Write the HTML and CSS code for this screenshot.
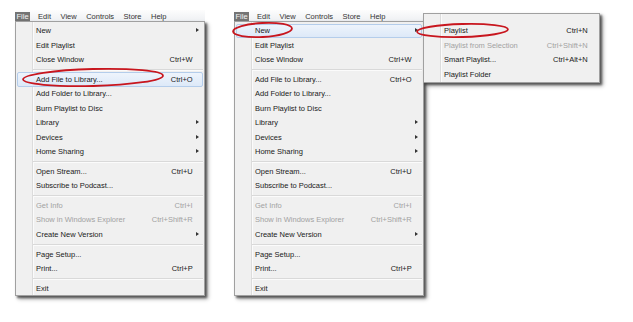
FILE: index.html
```html
<!DOCTYPE html>
<html>
<head>
<meta charset="utf-8">
<link rel="stylesheet" href="styles.css">
</head>
<body>
<div class="page">
  <div class="app">
    <div class="menubar">
      <span class="mb-item active">File</span><span class="mb-item">Edit</span><span class="mb-item">View</span><span class="mb-item">Controls</span><span class="mb-item">Store</span><span class="mb-item">Help</span>
    </div>
    <div class="menu main">
      <div class="item"><span class="label">New</span><span class="key"></span><span class="arrow sub"></span></div>
      <div class="item"><span class="label">Edit Playlist</span><span class="key"></span><span class="arrow"></span></div>
      <div class="item"><span class="label">Close Window</span><span class="key">Ctrl+W</span><span class="arrow"></span></div>
      <div class="sep"></div>
      <div class="item hot"><span class="label">Add File to Library...</span><span class="key">Ctrl+O</span><span class="arrow"></span></div>
      <div class="item"><span class="label">Add Folder to Library...</span><span class="key"></span><span class="arrow"></span></div>
      <div class="item"><span class="label">Burn Playlist to Disc</span><span class="key"></span><span class="arrow"></span></div>
      <div class="item"><span class="label">Library</span><span class="key"></span><span class="arrow sub"></span></div>
      <div class="item"><span class="label">Devices</span><span class="key"></span><span class="arrow sub"></span></div>
      <div class="item"><span class="label">Home Sharing</span><span class="key"></span><span class="arrow sub"></span></div>
      <div class="sep"></div>
      <div class="item"><span class="label">Open Stream...</span><span class="key">Ctrl+U</span><span class="arrow"></span></div>
      <div class="item"><span class="label">Subscribe to Podcast...</span><span class="key"></span><span class="arrow"></span></div>
      <div class="sep"></div>
      <div class="item off"><span class="label">Get Info</span><span class="key">Ctrl+I</span><span class="arrow"></span></div>
      <div class="item off"><span class="label">Show in Windows Explorer</span><span class="key">Ctrl+Shift+R</span><span class="arrow"></span></div>
      <div class="item"><span class="label">Create New Version</span><span class="key"></span><span class="arrow sub"></span></div>
      <div class="sep"></div>
      <div class="item"><span class="label">Page Setup...</span><span class="key"></span><span class="arrow"></span></div>
      <div class="item"><span class="label">Print...</span><span class="key">Ctrl+P</span><span class="arrow"></span></div>
      <div class="sep"></div>
      <div class="item"><span class="label">Exit</span><span class="key"></span><span class="arrow"></span></div>
    </div>
  </div>

  <div class="app">
    <div class="menubar">
      <span class="mb-item active">File</span><span class="mb-item">Edit</span><span class="mb-item">View</span><span class="mb-item">Controls</span><span class="mb-item">Store</span><span class="mb-item">Help</span>
    </div>
    <div class="menu main">
      <div class="item hot"><span class="label">New</span><span class="key"></span><span class="arrow sub"></span></div>
      <div class="item"><span class="label">Edit Playlist</span><span class="key"></span><span class="arrow"></span></div>
      <div class="item"><span class="label">Close Window</span><span class="key">Ctrl+W</span><span class="arrow"></span></div>
      <div class="sep"></div>
      <div class="item"><span class="label">Add File to Library...</span><span class="key">Ctrl+O</span><span class="arrow"></span></div>
      <div class="item"><span class="label">Add Folder to Library...</span><span class="key"></span><span class="arrow"></span></div>
      <div class="item"><span class="label">Burn Playlist to Disc</span><span class="key"></span><span class="arrow"></span></div>
      <div class="item"><span class="label">Library</span><span class="key"></span><span class="arrow sub"></span></div>
      <div class="item"><span class="label">Devices</span><span class="key"></span><span class="arrow sub"></span></div>
      <div class="item"><span class="label">Home Sharing</span><span class="key"></span><span class="arrow sub"></span></div>
      <div class="sep"></div>
      <div class="item"><span class="label">Open Stream...</span><span class="key">Ctrl+U</span><span class="arrow"></span></div>
      <div class="item"><span class="label">Subscribe to Podcast...</span><span class="key"></span><span class="arrow"></span></div>
      <div class="sep"></div>
      <div class="item off"><span class="label">Get Info</span><span class="key">Ctrl+I</span><span class="arrow"></span></div>
      <div class="item off"><span class="label">Show in Windows Explorer</span><span class="key">Ctrl+Shift+R</span><span class="arrow"></span></div>
      <div class="item"><span class="label">Create New Version</span><span class="key"></span><span class="arrow sub"></span></div>
      <div class="sep"></div>
      <div class="item"><span class="label">Page Setup...</span><span class="key"></span><span class="arrow"></span></div>
      <div class="item"><span class="label">Print...</span><span class="key">Ctrl+P</span><span class="arrow"></span></div>
      <div class="sep"></div>
      <div class="item"><span class="label">Exit</span><span class="key"></span><span class="arrow"></span></div>
    </div>
    <div class="menu submenu">
      <div class="item"><span class="label">Playlist</span><span class="key">Ctrl+N</span><span class="arrow"></span></div>
      <div class="item off"><span class="label">Playlist from Selection</span><span class="key">Ctrl+Shift+N</span><span class="arrow"></span></div>
      <div class="item"><span class="label">Smart Playlist...</span><span class="key">Ctrl+Alt+N</span><span class="arrow"></span></div>
      <div class="item"><span class="label">Playlist Folder</span><span class="key"></span><span class="arrow"></span></div>
    </div>
  </div>

  <svg class="marks" width="633" height="322" viewBox="0 0 633 322">
    <ellipse cx="93" cy="77.5" rx="70" ry="8.5" transform="rotate(-1.5 93 77.5)"/>
    <ellipse cx="262.5" cy="30" rx="29.5" ry="7" transform="rotate(-3 262.5 30)"/>
    <ellipse cx="462.5" cy="30.5" rx="45.5" ry="6.5" transform="rotate(-1.5 462.5 30.5)"/>
  </svg>
</div>
</body>
</html>
```

FILE: styles.css
```css
html, body {
  margin: 0;
  padding: 0;
  background: #ffffff;
}

.page {
  position: relative;
  width: 633px;
  height: 322px;
  display: flex;
  gap: 29px;
  padding: 10px 0 0 15px;
  box-sizing: border-box;
  font-family: "Liberation Sans", Arial, sans-serif;
  font-size: 7.5px;
  color: #1a1a1a;
}

.app {
  position: relative;
  width: 190px;
  display: flex;
  flex-direction: column;
}

.menubar {
  height: 11px;
  display: flex;
  align-items: flex-end;
  gap: 6.5px;
  background: linear-gradient(#fdfdfd, #eef0f3);
  color: #333;
}

.mb-item {
  padding: 0 1.5px;
  height: 9px;
  line-height: 9px;
}

.mb-item.active {
  background: #747474;
  color: #f4f4f4;
}

.menu {
  box-sizing: border-box;
  border: 1px solid #a0a0a0;
  background:
    linear-gradient(to right, transparent 0, transparent 15.5px, #dcdcdc 15.5px, #dcdcdc 16.5px, #fbfbfb 16.5px, #fbfbfb 17.5px, transparent 17.5px),
    #f0f0f0;
  box-shadow: 2px 2px 2px rgba(0, 0, 0, 0.5), 3px 3px 4px rgba(0, 0, 0, 0.35);
}

.main {
  width: 190px;
  height: 275px;
  padding: 1.5px 0 1px;
}

.submenu {
  position: absolute;
  left: 189px;
  top: 3px;
  width: 177px;
  height: 70px;
  padding: 9.5px 0 0;
  z-index: 2;
}

.item {
  display: flex;
  align-items: center;
  height: 14.45px;
  margin: 0 1px;
  padding: 0 1px 0 18px;
  border: 1px solid transparent;
  border-radius: 2px;
  box-sizing: border-box;
  white-space: nowrap;
}

.item.hot {
  background: linear-gradient(#eef4fc, #dde9f8);
  border-color: #b4cdeb;
}

.item.off {
  color: #a2a2a2;
}

.label {
  flex: 1;
}

.key {
  text-align: right;
}

.arrow {
  width: 8.3px;
  height: 5px;
  flex: none;
  position: relative;
}

.arrow.sub::before {
  content: "";
  position: absolute;
  left: 3px;
  top: 0;
  border-left: 3px solid #333;
  border-top: 2.5px solid transparent;
  border-bottom: 2.5px solid transparent;
}

.sep {
  height: 5.3px;
  margin-left: 17px;
  margin-right: 1px;
  position: relative;
}

.sep::before {
  content: "";
  position: absolute;
  left: 0;
  right: 0;
  top: 2px;
  height: 1px;
  background: #d9d9d9;
  box-shadow: 0 1px 0 #fbfbfb;
}

.marks {
  position: absolute;
  left: 0;
  top: 0;
  pointer-events: none;
  z-index: 5;
}

.marks ellipse {
  fill: none;
  stroke: #c8161e;
  stroke-width: 1.8;
}
```
